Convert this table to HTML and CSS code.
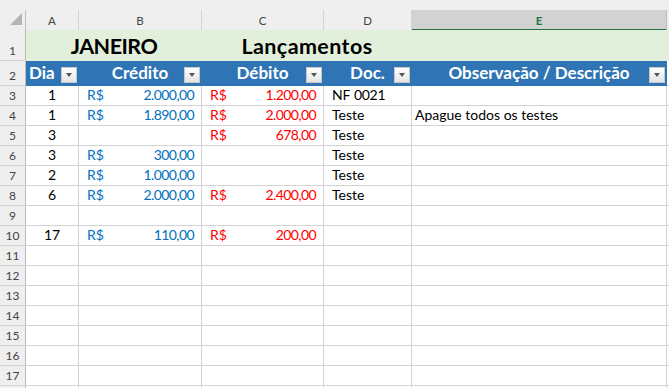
FILE: index.html
```html
<!DOCTYPE html>
<html lang="pt-BR">
<head>
<meta charset="utf-8">
<title>Janeiro - Lançamentos</title>
<link rel="stylesheet" href="styles.css">
</head>
<body>
<div class="sheet">
  <div class="topstrip"></div>

  <div class="row hdr">
    <div class="corner"><svg width="26" height="20" viewBox="0 0 26 20"><polygon points="22,3 22,15 10,15" fill="#b4b4b4"/></svg></div>
    <div class="colh">A</div>
    <div class="colh">B</div>
    <div class="colh">C</div>
    <div class="colh">D</div>
    <div class="colh sel">E</div>
    <div class="colh last"></div>
  </div>

  <div class="row r1">
    <div class="rowh">1</div>
    <div class="title span2 month">JANEIRO</div>
    <div class="title span2 heading">Lançamentos</div>
    <div class="title"></div>
    <div class="title last"></div>
  </div>

  <div class="row r2">
    <div class="rowh">2</div>
    <div class="th left">Dia<span class="filter"></span></div>
    <div class="th">Crédito<span class="filter"></span></div>
    <div class="th">Débito<span class="filter"></span></div>
    <div class="th">Doc.<span class="filter"></span></div>
    <div class="th">Observação / Descrição<span class="filter"></span></div>
    <div class="cell last"></div>
  </div>

  <div class="row">
    <div class="rowh">3</div>
    <div class="cell c">1</div>
    <div class="cell money blue"><span>R$</span><span class="num">2.000,00</span></div>
    <div class="cell money red"><span>R$</span><span class="num">1.200,00</span></div>
    <div class="cell doc"><span class="code">NF 0021</span></div>
    <div class="cell"></div>
    <div class="cell last"></div>
  </div>

  <div class="row">
    <div class="rowh">4</div>
    <div class="cell c">1</div>
    <div class="cell money blue"><span>R$</span><span class="num">1.890,00</span></div>
    <div class="cell money red"><span>R$</span><span class="num">2.000,00</span></div>
    <div class="cell doc">Teste</div>
    <div class="cell obs">Apague todos os testes</div>
    <div class="cell last"></div>
  </div>

  <div class="row">
    <div class="rowh">5</div>
    <div class="cell c">3</div>
    <div class="cell"></div>
    <div class="cell money red"><span>R$</span><span class="num">678,00</span></div>
    <div class="cell doc">Teste</div>
    <div class="cell"></div>
    <div class="cell last"></div>
  </div>

  <div class="row">
    <div class="rowh">6</div>
    <div class="cell c">3</div>
    <div class="cell money blue"><span>R$</span><span class="num">300,00</span></div>
    <div class="cell"></div>
    <div class="cell doc">Teste</div>
    <div class="cell"></div>
    <div class="cell last"></div>
  </div>

  <div class="row">
    <div class="rowh">7</div>
    <div class="cell c">2</div>
    <div class="cell money blue"><span>R$</span><span class="num">1.000,00</span></div>
    <div class="cell"></div>
    <div class="cell doc">Teste</div>
    <div class="cell"></div>
    <div class="cell last"></div>
  </div>

  <div class="row">
    <div class="rowh">8</div>
    <div class="cell c">6</div>
    <div class="cell money blue"><span>R$</span><span class="num">2.000,00</span></div>
    <div class="cell money red"><span>R$</span><span class="num">2.400,00</span></div>
    <div class="cell doc">Teste</div>
    <div class="cell"></div>
    <div class="cell last"></div>
  </div>

  <div class="row">
    <div class="rowh">9</div>
    <div class="cell"></div><div class="cell"></div><div class="cell"></div><div class="cell"></div><div class="cell"></div><div class="cell last"></div>
  </div>

  <div class="row">
    <div class="rowh">10</div>
    <div class="cell c">17</div>
    <div class="cell money blue"><span>R$</span><span class="num">110,00</span></div>
    <div class="cell money red"><span>R$</span><span class="num">200,00</span></div>
    <div class="cell"></div>
    <div class="cell"></div>
    <div class="cell last"></div>
  </div>

  <div class="row"><div class="rowh">11</div><div class="cell"></div><div class="cell"></div><div class="cell"></div><div class="cell"></div><div class="cell"></div><div class="cell last"></div></div>
  <div class="row"><div class="rowh">12</div><div class="cell"></div><div class="cell"></div><div class="cell"></div><div class="cell"></div><div class="cell"></div><div class="cell last"></div></div>
  <div class="row"><div class="rowh">13</div><div class="cell"></div><div class="cell"></div><div class="cell"></div><div class="cell"></div><div class="cell"></div><div class="cell last"></div></div>
  <div class="row"><div class="rowh">14</div><div class="cell"></div><div class="cell"></div><div class="cell"></div><div class="cell"></div><div class="cell"></div><div class="cell last"></div></div>
  <div class="row"><div class="rowh">15</div><div class="cell"></div><div class="cell"></div><div class="cell"></div><div class="cell"></div><div class="cell"></div><div class="cell last"></div></div>
  <div class="row"><div class="rowh">16</div><div class="cell"></div><div class="cell"></div><div class="cell"></div><div class="cell"></div><div class="cell"></div><div class="cell last"></div></div>
  <div class="row"><div class="rowh">17</div><div class="cell"></div><div class="cell"></div><div class="cell"></div><div class="cell"></div><div class="cell"></div><div class="cell last"></div></div>
  <div class="row"><div class="rowh"></div><div class="cell"></div><div class="cell"></div><div class="cell"></div><div class="cell"></div><div class="cell"></div><div class="cell last"></div></div>
</div>
</body>
</html>
```

FILE: styles.css
```css
* { box-sizing: border-box; }

html, body {
  margin: 0;
  padding: 0;
  background: #ffffff;
  overflow: hidden;
}

.sheet {
  width: 669px;
  height: 388px;
  overflow: hidden;
  font-family: Lato, "Liberation Sans", sans-serif;
  color: #000;
}

.topstrip {
  height: 10px;
  background: #efefef;
}

.row {
  display: grid;
  grid-template-columns: 26px 53px 123px 122px 88px 255px 1fr;
  height: 20px;
}

.row.hdr { height: 20px; }
.row.r1 { height: 31px; }
.row.r2 { height: 25px; }

/* column headers */
.corner {
  background: #efefef;
  border-right: 1px solid #bdbdbd;
  border-bottom: 1px solid #bdbdbd;
  line-height: 0;
}

.colh {
  background: #efefef;
  border-right: 1px solid #d4d4d4;
  border-bottom: 1px solid #bdbdbd;
  font-size: 11.5px;
  color: #444;
  display: flex;
  align-items: center;
  justify-content: center;
  padding-top: 1px;
}

.colh.sel {
  background: #d2d2d2;
  color: #217346;
  font-weight: 700;
  border-bottom: 2px solid #217346;
  border-right-color: #bdbdbd;
  padding-top: 2px;
}

.colh.last { border-right: none; }

/* row headers */
.rowh {
  background: #efefef;
  border-right: 1px solid #bdbdbd;
  border-bottom: 1px solid #d4d4d4;
  font-size: 12px;
  color: #444;
  display: flex;
  align-items: flex-end;
  justify-content: center;
  padding-bottom: 2px;
  line-height: 14px;
}

/* row 1 (title band) */
.title {
  background: #e2efda;
  font-weight: 700;
  font-size: 21.5px;
  display: flex;
  align-items: flex-end;
  justify-content: center;
  padding-bottom: 2px;
  line-height: 25px;
}

.title.month { letter-spacing: -0.5px; }
.title.heading { letter-spacing: 0.4px; }

.span2 { grid-column: span 2; }

/* row 2 (table header) */
.th {
  position: relative;
  background: #2f75b5;
  color: #ffffff;
  font-weight: 700;
  font-size: 17px;
  display: flex;
  align-items: flex-end;
  justify-content: center;
  padding-bottom: 3px;
  line-height: 20px;
  border-right: 1px solid #2f75b5;
}

.th.left {
  justify-content: flex-start;
  padding-left: 3px;
}

.filter {
  position: absolute;
  right: 1px;
  bottom: 3px;
  width: 16px;
  height: 16px;
  background: linear-gradient(#ffffff, #e4e4e4);
  border: 1px solid #c8c8c8;
}

.filter::after {
  content: "";
  position: absolute;
  left: 4px;
  top: 5px;
  border-left: 3.5px solid transparent;
  border-right: 3.5px solid transparent;
  border-top: 4px solid #555555;
}

/* data cells */
.cell {
  border-right: 1px solid #d4d4d4;
  border-bottom: 1px solid #d4d4d4;
  font-size: 14px;
  line-height: 16px;
  display: flex;
  align-items: flex-end;
  padding: 0 3px 2px;
  white-space: nowrap;
}

.cell.last { border-right: none; }

.cell.c { justify-content: center; }

.cell.money {
  justify-content: space-between;
  padding: 0 7px 2px 8px;
}

.num { letter-spacing: -0.6px; }
.code { letter-spacing: -0.3px; word-spacing: 1px; }

.cell.doc { padding-left: 8px; }

.cell.obs { padding-left: 3px; }

.blue { color: #0070c0; }
.red { color: #ff0000; }
```
